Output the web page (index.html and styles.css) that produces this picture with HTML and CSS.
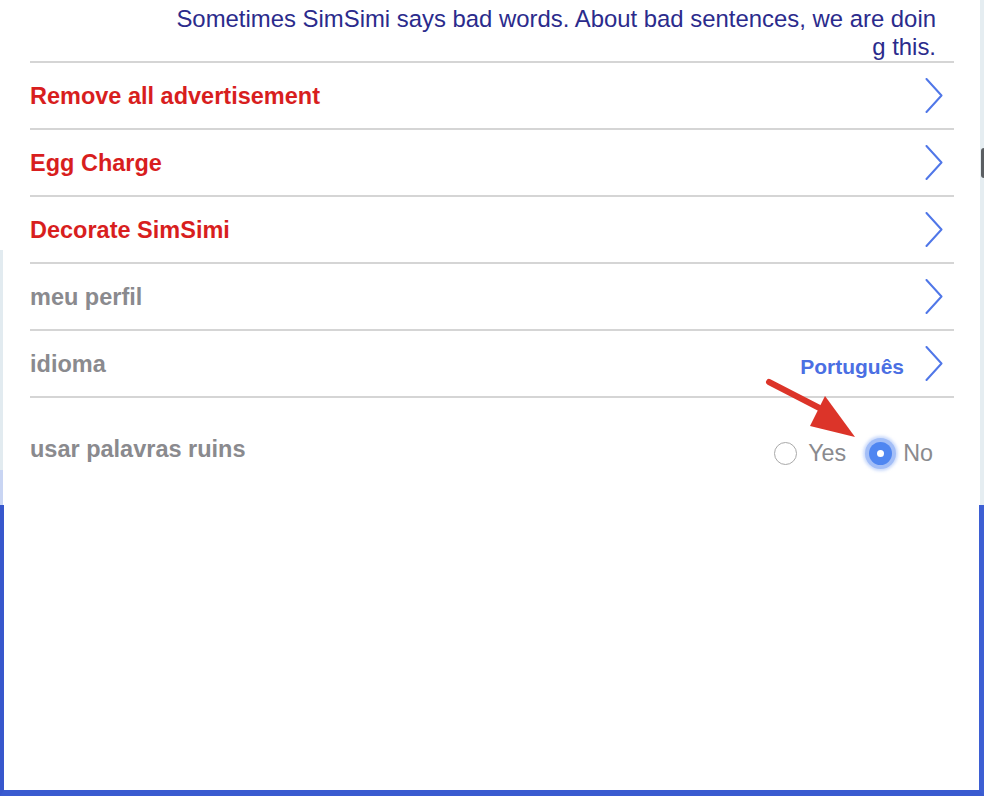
FILE: index.html
```html
<!DOCTYPE html>
<html lang="pt">
<head>
<meta charset="utf-8">
<title>SimSimi settings</title>
<link rel="stylesheet" href="styles.css">
</head>
<body>
<div class="top">
  <div class="strip-left"></div>
  <main class="panel">
    <p class="note">Sometimes SimSimi says bad words. About bad sentences, we are doin<br>g this.</p>
    <div class="row">
      <span class="label red">Remove all advertisement</span>
      <span class="end"><svg class="chev" viewBox="0 0 18 35"><polyline points="1.5,1 16.5,17.5 1.5,34"/></svg></span>
    </div>
    <div class="row">
      <span class="label red">Egg Charge</span>
      <span class="end"><svg class="chev" viewBox="0 0 18 35"><polyline points="1.5,1 16.5,17.5 1.5,34"/></svg></span>
    </div>
    <div class="row">
      <span class="label red">Decorate SimSimi</span>
      <span class="end"><svg class="chev" viewBox="0 0 18 35"><polyline points="1.5,1 16.5,17.5 1.5,34"/></svg></span>
    </div>
    <div class="row">
      <span class="label grey">meu perfil</span>
      <span class="end"><svg class="chev" viewBox="0 0 18 35"><polyline points="1.5,1 16.5,17.5 1.5,34"/></svg></span>
    </div>
    <div class="row">
      <span class="label grey">idioma</span>
      <span class="end"><span class="value">Português</span><svg class="chev" viewBox="0 0 18 35"><polyline points="1.5,1 16.5,17.5 1.5,34"/></svg></span>
    </div>
    <div class="row last">
      <span class="label grey">usar palavras ruins</span>
      <span class="radios">
        <span class="opt"><span class="radio"></span><span class="opt-text">Yes</span></span>
        <span class="opt"><span class="radio on"><span class="dot"></span></span><span class="opt-text">No</span></span>
      </span>
    </div>
    <svg class="arrow" viewBox="0 0 100 70" width="100" height="70">
      <line x1="4" y1="4" x2="70" y2="38" />
      <polygon points="60,18 90,59 45,48" />
    </svg>
  </main>
  <div class="strip-right"><div class="blob"></div></div>
</div>
<div class="frame"></div>
</body>
</html>
```
FILE: styles.css
```css
html, body {
  margin: 0;
  padding: 0;
  background: #ffffff;
}
body {
  width: 984px;
  height: 796px;
  overflow: hidden;
  font-family: "Liberation Sans", Arial, sans-serif;
}
.top {
  display: grid;
  grid-template-columns: 3px 1fr 4px;
  height: 505px;
}
.strip-left {
  background: linear-gradient(to bottom, #ffffff 0, #ffffff 250px, #e2ebf0 250px, #e2ebf0 470px, #c9d5f3 470px);
}
.strip-right {
  background: #e5edf1;
  padding-top: 148px;
}
.blob {
  height: 30px;
  background: #5a5e62;
  border-radius: 14px 0 0 14px;
  margin-left: 1px;
}
.panel {
  position: relative;
  padding: 0 26px 0 27px;
  background: #ffffff;
}
.note {
  margin: 0;
  height: 63px;
  box-sizing: border-box;
  padding: 5px 18px 0 0;
  text-align: right;
  font-size: 23.9px;
  line-height: 28px;
  color: #2b2b8c;
  border-bottom: 2px solid #d5d5d5;
}
.row {
  display: flex;
  align-items: center;
  justify-content: space-between;
  height: 65px;
  border-bottom: 2px solid #d5d5d5;
}
.row.last {
  height: 102px;
  border-bottom: none;
  align-items: flex-start;
  padding-top: 37px;
  box-sizing: border-box;
}
.label {
  font-weight: bold;
  font-size: 23.5px;
  line-height: 28px;
}
.red { color: #d81e1e; }
.grey { color: #8a8a8e; }
.end {
  display: flex;
  align-items: center;
  gap: 21px;
  padding-right: 11px;
}
.value {
  font-weight: bold;
  font-size: 21px;
  color: #4b6fe3;
  margin-top: 6px;
}
.chev {
  width: 18px;
  height: 35px;
  display: block;
}
.chev polyline {
  fill: none;
  stroke: #5077e8;
  stroke-width: 2;
  stroke-linecap: round;
  stroke-linejoin: round;
}
.radios {
  display: flex;
  align-items: center;
  gap: 19px;
  padding-right: 21px;
  margin-top: 4px;
}
.opt {
  display: flex;
  align-items: center;
  gap: 11px;
}
.opt-text {
  font-size: 23.3px;
  color: #8a8a8e;
  line-height: 28px;
}
.radio {
  box-sizing: border-box;
  width: 23px;
  height: 23px;
  border-radius: 50%;
  border: 1.5px solid #a9a9a9;
  background: #ffffff;
  display: flex;
  align-items: center;
  justify-content: center;
}
.radio.on {
  border: none;
  background: #4f86f1;
  box-shadow: 0 0 0 4px #a3bef7, 0 0 3px 6px rgba(163, 190, 247, 0.55);
  margin-left: 4px;
}
.dot {
  width: 7px;
  height: 7px;
  border-radius: 50%;
  background: #ffffff;
}
.arrow {
  position: absolute;
  left: 762px;
  top: 378px;
}
.arrow line {
  stroke: #dc3429;
  stroke-width: 6;
  stroke-linecap: round;
}
.arrow polygon {
  fill: #dc3429;
}
.frame {
  box-sizing: border-box;
  height: 291px;
  border-left: 4px solid #3757cc;
  border-right: 5px solid #3d5fd3;
  border-bottom: 6px solid #3a5bd0;
  background: #ffffff;
}
```
